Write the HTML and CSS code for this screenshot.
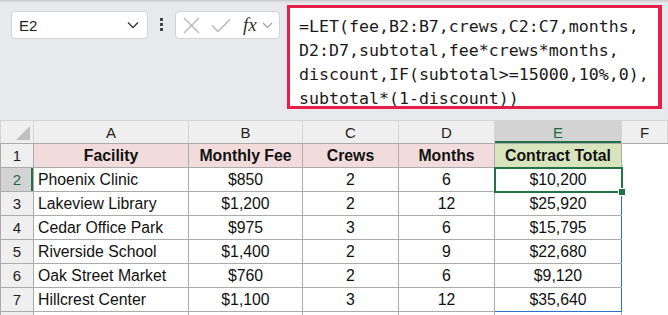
FILE: index.html
```html
<!DOCTYPE html>
<html>
<head>
   <meta charset="UTF-8">
   <title>Contract totals</title>
   <link rel="stylesheet" href="styles.css">
</head>
<body>
   <div class="toolbar">
      <div class="name-box">
         <span>E2</span>
         <svg width="12" height="8" viewBox="0 0 12 8"><path d="M1 1.5 L6 6.5 L11 1.5" fill="none" stroke="#333" stroke-width="1.3"/></svg>
      </div>
      <div class="dots"><i></i><i></i><i></i></div>
      <div class="fx-box">
         <svg width="17" height="17" viewBox="0 0 17 17"><path d="M1 1 L16 16 M16 1 L1 16" stroke="#b5b5b5" stroke-width="1.3"/></svg>
         <svg width="20" height="15" viewBox="0 0 20 15"><path d="M1 7.5 L7 13.5 L19 1.5" fill="none" stroke="#b5b5b5" stroke-width="1.3"/></svg>
         <span class="fx">fx</span>
         <svg width="11" height="7" viewBox="0 0 11 7"><path d="M1 1 L5.5 5.5 L10 1" fill="none" stroke="#9a9a9a" stroke-width="1.1"/></svg>
      </div>
      <div class="formula">=LET(fee,B2:B7,crews,C2:C7,months,<br>D2:D7,subtotal,fee*crews*months,<br>discount,IF(subtotal&gt;=15000,10%,0),<br>subtotal*(1-discount))</div>
   </div>
   <table class="sheet">
      <colgroup>
         <col style="width:33px"><col style="width:155px"><col style="width:114px"><col style="width:96px"><col style="width:96px"><col style="width:127px"><col>
      </colgroup>
      <tr class="col-heads">
         <th class="corner"><span class="tri"></span></th>
         <th>A</th><th>B</th><th>C</th><th>D</th><th class="sel-col">E</th><th>F</th>
      </tr>
      <tr>
         <th class="row-head">1</th>
         <td class="head">Facility</td><td class="head">Monthly Fee</td><td class="head">Crews</td><td class="head">Months</td><td class="head total-head">Contract Total</td><td class="blank"></td>
      </tr>
      <tr>
         <th class="row-head sel-row">2</th>
         <td class="name">Phoenix Clinic</td><td>$850</td><td>2</td><td>6</td><td class="range active">$10,200<span class="handle"></span></td><td class="blank"></td>
      </tr>
      <tr>
         <th class="row-head">3</th>
         <td class="name">Lakeview Library</td><td>$1,200</td><td>2</td><td>12</td><td class="range">$25,920</td><td class="blank"></td>
      </tr>
      <tr>
         <th class="row-head">4</th>
         <td class="name">Cedar Office Park</td><td>$975</td><td>3</td><td>6</td><td class="range">$15,795</td><td class="blank"></td>
      </tr>
      <tr>
         <th class="row-head">5</th>
         <td class="name">Riverside School</td><td>$1,400</td><td>2</td><td>9</td><td class="range">$22,680</td><td class="blank"></td>
      </tr>
      <tr>
         <th class="row-head">6</th>
         <td class="name">Oak Street Market</td><td>$760</td><td>2</td><td>6</td><td class="range">$9,120</td><td class="blank"></td>
      </tr>
      <tr>
         <th class="row-head">7</th>
         <td class="name">Hillcrest Center</td><td>$1,100</td><td>3</td><td>12</td><td class="range last">$35,640</td><td class="blank"></td>
      </tr>
      <tr class="extra">
         <th class="row-head"></th><td></td><td></td><td></td><td></td><td></td><td class="blank"></td>
      </tr>
   </table>
</body>
</html>
```

FILE: styles.css
```css
body {
   margin: 0;
   background: #fff;
   font-family: "Liberation Sans", Arial, sans-serif;
   overflow: hidden;
}
.toolbar {
   height: 120px;
   box-sizing: border-box;
   background: #e8e9ed;
   box-shadow: inset 0 3px 3px -2px rgba(0, 0, 0, 0.18);
   display: flex;
   align-items: flex-start;
   padding: 5px 0 0 11px;
}
.name-box {
   margin-top: 6px;
   width: 137px;
   height: 28px;
   box-sizing: border-box;
   background: #fff;
   border: 1px solid #d2d3d6;
   border-radius: 4px;
   display: flex;
   align-items: center;
   justify-content: space-between;
   padding: 0 8px 0 7px;
   font-size: 15px;
   color: #222;
}
.dots {
   margin: 13px 0 0 0;
   width: 27px;
   display: flex;
   flex-direction: column;
   align-items: center;
   gap: 2px;
}
.dots i {
   width: 3px;
   height: 3px;
   background: #444;
}
.fx-box {
   margin-top: 6px;
   width: 105px;
   height: 28px;
   box-sizing: border-box;
   background: #fff;
   border: 1px solid #d2d3d6;
   border-radius: 4px;
   display: flex;
   align-items: center;
   gap: 11px;
   padding: 0 0 0 7px;
}
.fx-box .fx {
   font-family: "Liberation Serif", serif;
   font-style: italic;
   font-size: 19px;
   color: #333;
   margin-left: 1px;
   margin-right: -6px;
}
.formula {
   margin-left: 7px;
   width: 375px;
   height: 104px;
   box-sizing: border-box;
   border: 3px solid #e51f48;
   border-right-width: 4px;
   background: #fff;
   padding: 7px 0 0 9px;
   font-family: "DejaVu Sans Mono", "Liberation Mono", monospace;
   font-size: 16.6px;
   line-height: 24px;
   color: #1a1a1a;
   white-space: nowrap;
}
.sheet {
   border-collapse: collapse;
   table-layout: fixed;
   width: 668px;
   font-size: 15.8px;
   color: #111;
}
.sheet th, .sheet td {
   height: 23px;
   padding: 0;
   border: 1px solid #ababab;
   text-align: center;
   font-weight: normal;
   white-space: nowrap;
   overflow: visible;
}
.sheet th {
   font-size: 15px;
}
.col-heads th {
   background: #efefef;
   border-color: #d4d4d4;
   border-bottom-color: #ababab;
   height: 22px;
   color: #222;
}
.corner {
   position: relative;
}
.tri {
   position: absolute;
   right: 3px;
   bottom: 3px;
   width: 0;
   height: 0;
   border-left: 14px solid transparent;
   border-bottom: 14px solid #bfbfbf;
}
.col-heads th.sel-col {
   background: #d3d3d3;
   color: #1d6b40;
   box-shadow: inset 0 -2px 0 #217346;
}
.row-head {
   background: #efefef;
   color: #222;
   border-color: #d4d4d4 #ababab #d4d4d4 #d4d4d4;
}
.sheet th.sel-row {
   background: #d3d3d3;
   color: #1d6b40;
   box-shadow: inset -2px 0 0 #217346;
}
.sheet td.head {
   background: #f2dcdb;
   font-weight: bold;
}
.sheet td.total-head {
   background: #d8e4bc;
}
.sheet td.name {
   text-align: left;
   padding-left: 4px;
}
.sheet td.range {
   border-left: 1px solid #2a6fc9;
   border-right: 1px solid #2a6fc9;
}
.sheet td.range.last {
   border-bottom: 1px solid #2a6fc9;
}
.sheet td.active {
   position: relative;
   outline: 2px solid #217346;
   outline-offset: -1px;
}
.handle {
   position: absolute;
   right: -5px;
   bottom: -5px;
   width: 6px;
   height: 6px;
   background: #217346;
   border: 1px solid #fff;
}
.sheet td.blank {
   border-top-color: transparent;
   border-bottom-color: transparent;
   border-right-color: transparent;
}
```
